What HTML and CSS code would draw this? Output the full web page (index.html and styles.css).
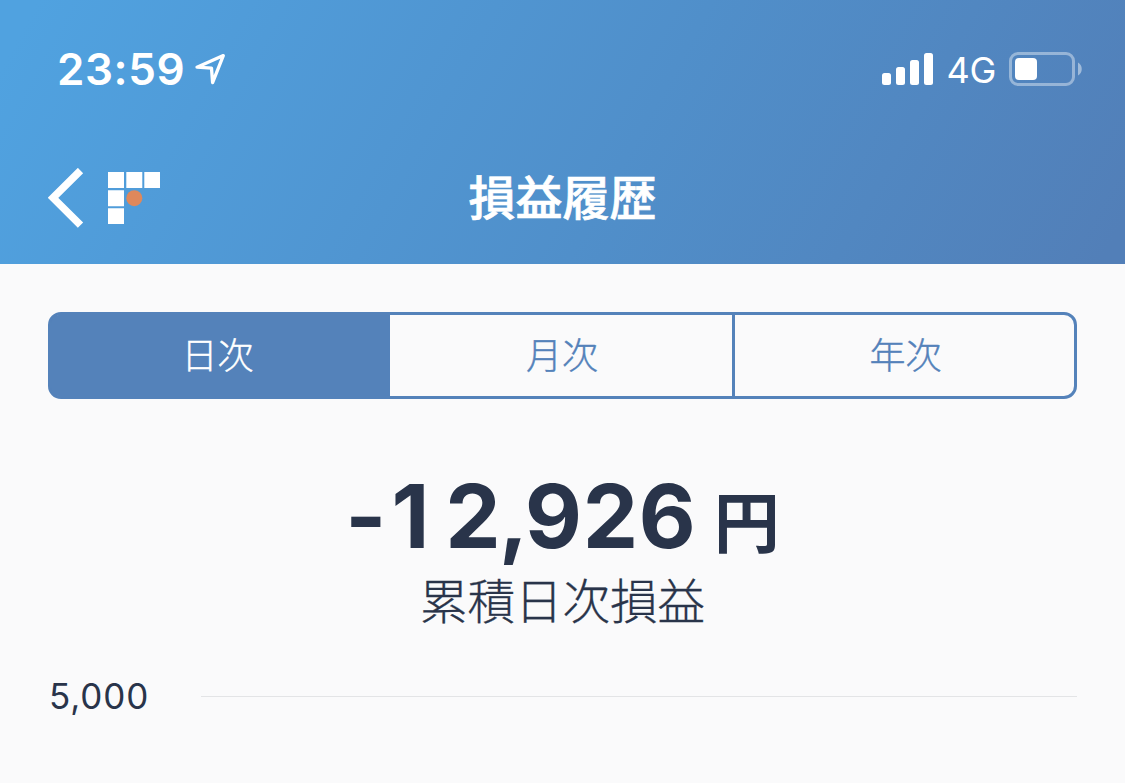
FILE: index.html
```html
<!DOCTYPE html>
<html lang="ja">
<head>
<meta charset="utf-8">
<title>損益履歴</title>
<link rel="stylesheet" href="styles.css">
</head>
<body>
<header class="header">
  <div class="status">
    <div class="status-left">
      <span class="time">23:59</span>
      <svg class="location" width="32" height="34" viewBox="0 0 32 34"><path d="M3 15.2 29.3 3.6 18.6 30.6 17.5 16.2Z" fill="none" stroke="#fff" stroke-width="3.3" stroke-linejoin="round"/></svg>
    </div>
    <div class="status-right">
      <svg class="signal" width="52" height="33" viewBox="0 0 52 33" fill="#fff"><rect x="0" y="20" width="9" height="12" rx="2.5"/><rect x="14" y="14" width="9" height="18" rx="2.5"/><rect x="28" y="7" width="9" height="25" rx="2.5"/><rect x="42" y="0" width="9" height="32" rx="2.5"/></svg>
      <span class="network">4G</span>
      <svg class="battery" width="74" height="34" viewBox="0 0 74 34"><rect x="1.5" y="1.5" width="63" height="31" rx="7.5" fill="none" stroke="#fff" stroke-opacity=".4" stroke-width="3"/><rect x="6" y="6" width="22" height="22" rx="4" fill="#fff"/><path d="M69 10.5c5 2.5 5 10.5 0 13Z" fill="#fff" fill-opacity=".45"/></svg>
    </div>
  </div>
  <nav class="nav">
    <div class="nav-left">
      <svg width="36" height="60" viewBox="0 0 36 60"><path d="M32.5 2.5 5 29.8 32.5 57.2" fill="none" stroke="#fff" stroke-width="7.5"/></svg>
      <svg width="52" height="52" viewBox="0 0 52 52" fill="#fff"><path d="M0 0h16v16H0zM18.3 0h16v16h-16zM36.3 0H52v16H36.3zM0 18.2h16v16H0zM0 36.2h16V52H0z"/><circle cx="26.3" cy="26.2" r="8" fill="#df885b"/></svg>
    </div>
    <h1 class="title">損益履歴</h1>
  </nav>
</header>
<main class="content">
  <div class="tabs">
    <div class="tab active">日次</div>
    <div class="tab">月次</div>
    <div class="tab">年次</div>
  </div>
  <section class="total">
    <div class="amount"><span class="minus">-</span><span class="number"><span class="one">1</span>2,926</span><span class="unit">円</span></div>
    <div class="caption">累積日次損益</div>
  </section>
  <div class="chart-row"><span class="tick">5,000</span><span class="gridline"></span></div>
</main>
</body>
</html>
```
FILE: styles.css
```css
* { box-sizing: border-box; }
body {
  margin: 0;
  height: 783px;
  overflow: hidden;
  background: #fafafb;
  color: #29344a;
  font-family: Inter, "Noto Sans CJK JP", sans-serif;
}
.header {
  height: 264px;
  padding: 0 42px 0 48px;
  background: linear-gradient(119deg, #50a2e0 3%, #508fca 56%, #527fb8 98%);
  color: #fff;
}
.status {
  display: flex;
  justify-content: space-between;
  height: 132px;
  padding: 4px 0 0 9px;
}
.status-left, .status-right {
  display: flex;
  align-items: center;
  height: 130px;
}
.time { font-size: 44px; font-weight: 570; letter-spacing: .6px; }
.location { margin-left: 9px; }
.network { margin: 2px 13px 0 12px; font-size: 36px; letter-spacing: -.3px; }
.nav {
  display: grid;
  grid-template-columns: 1fr auto 1fr;
  align-items: center;
  height: 132px;
  margin-right: 6px;
}
.nav-left { display: flex; align-items: center; gap: 24px; }
.title {
  margin: 0;
  font-size: 47px;
  font-weight: 500;
  line-height: 64px;
  -webkit-text-stroke: .7px #fff;
}
.content { padding: 48px 48px 0; }
.tabs {
  display: grid;
  grid-template-columns: 339px 345px 1fr;
  height: 87px;
  border: 3px solid #5482ba;
  border-radius: 13px;
  color: #5482ba;
  font-size: 36px;
  font-weight: 300;
  -webkit-text-stroke: .4px currentColor;
}
.tab {
  display: flex;
  align-items: center;
  justify-content: center;
  padding: 0 0 5px 2px;
}
.tab:nth-child(2) { border-right: 3px solid #5482ba; }
.active {
  padding: 0 6px 5px 0;
  border-radius: 9px 0 0 9px;
  background: #5482ba;
  box-shadow: -1px 0 0 #5482ba;
  color: #fff;
}
.total { padding-top: 63px; text-align: center; }
.amount {
  display: flex;
  justify-content: center;
  align-items: baseline;
  height: 108px;
  line-height: 108px;
  font-weight: 700;
}
.minus, .number { font-size: 88px; }
.minus { margin-right: 4px; }
.number { font-feature-settings: "tnum"; }
.one {
  display: inline-block;
  width: 54px;
  padding-left: 1px;
  font-feature-settings: "tnum" 0;
  text-align: left;
}
.unit {
  position: relative;
  top: -1px;
  margin-left: 18px;
  font-size: 66px;
}
.caption {
  height: 63px;
  line-height: 63px;
  font-size: 47.5px;
  font-weight: 300;
  -webkit-text-stroke: .3px currentColor;
}
.chart-row { display: flex; align-items: center; height: 46px; margin-top: 40px; }
.tick { width: 153px; font-size: 35px; letter-spacing: .9px; padding-left: 1px; }
.gridline { flex: 1; height: 1px; background: #e3e4e6; }
```
